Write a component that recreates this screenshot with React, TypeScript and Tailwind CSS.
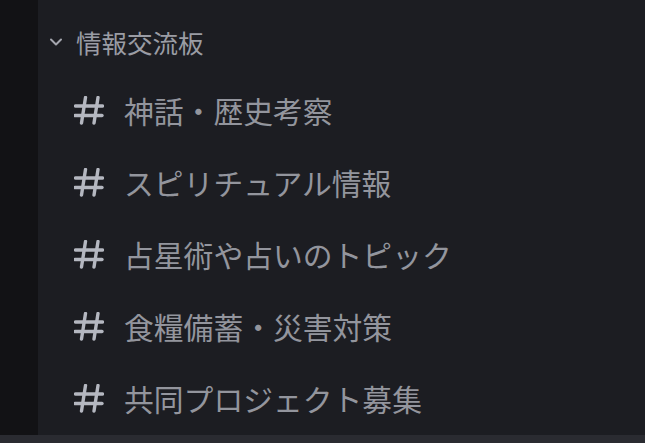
import React from 'react';

const channels = [
  '神話・歴史考察',
  'スピリチュアル情報',
  '占星術や占いのトピック',
  '食糧備蓄・災害対策',
  '共同プロジェクト募集',
];

function HashIcon() {
  return (
    <svg width="30" height="30" viewBox="0 0 30 30" fill="none" className="shrink-0">
      <g stroke="#b4b7c0" strokeWidth="3.4" strokeLinecap="round">
        <line x1="11.5" y1="1.5" x2="7.5" y2="27" />
        <line x1="24" y1="1.5" x2="20" y2="27" />
        <line x1="1.5" y1="10" x2="28.5" y2="10" />
        <line x1="1" y1="19.5" x2="28" y2="19.5" />
      </g>
    </svg>
  );
}

export default function App() {
  return (
    <div
      className="w-[645px] h-[443px] flex flex-col overflow-hidden bg-[#1c1d22]"
      style={{ fontFamily: '"Noto Sans CJK JP", "Noto Sans", sans-serif' }}
    >
      <div className="flex flex-1 min-h-0">
        {/* server rail edge */}
        <div className="w-[38px] shrink-0 bg-[#121215]" />

        {/* channel list */}
        <div className="flex-1 flex flex-col pt-[22px] overflow-hidden">
          <div className="h-[40px] flex items-center pl-[11px] gap-[13px] text-[#9a9ca4]">
            <svg width="14" height="10" viewBox="0 0 14 10" fill="none">
              <path d="M2 2.5 L7 7.5 L12 2.5" stroke="#a4a6ae" strokeWidth="2" strokeLinecap="round" strokeLinejoin="round" />
            </svg>
            <span className="text-[25.5px] leading-none">情報交流板</span>
          </div>
          <div className="flex flex-col pt-[14px]">
            {channels.map((name) => (
              <div key={name} className="h-[72px] shrink-0 flex items-center pl-[36px] gap-[20px]">
                <HashIcon />
                <span className="text-[29.8px] leading-none text-[#93959d]">{name}</span>
              </div>
            ))}
          </div>
        </div>
      </div>
      <div className="h-[8px] shrink-0 bg-[#2a2b31]" />
    </div>
  );
}
